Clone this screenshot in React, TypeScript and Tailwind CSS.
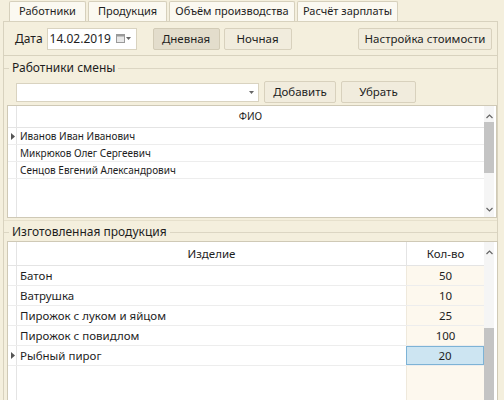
import React from 'react';

// ─── Data ─────────────────────────────────────────────────────────────────────

const tabs = [
  { label: 'Работники', w: 'w-[77px]' },
  { label: 'Продукция', w: 'w-[79px]' },
  { label: 'Объём производства', w: 'w-[126px]' },
  { label: 'Расчёт зарплаты', w: 'w-[101px]' },
];

const workers = ['Иванов Иван Иванович', 'Микрюков Олег Сергеевич', 'Сенцов Евгений Александрович'];

const products = [
  { name: 'Батон', qty: 50 },
  { name: 'Ватрушка', qty: 10 },
  { name: 'Пирожок с луком и яйцом', qty: 25 },
  { name: 'Пирожок с повидлом', qty: 100 },
  { name: 'Рыбный пирог', qty: 20 },
];

// ─── Small pieces ─────────────────────────────────────────────────────────────

function RowArrow() {
  return (
    <svg width="4" height="7" viewBox="0 0 4 7" className="ml-[3px]">
      <path d="M0 0 L4 3.5 L0 7 Z" fill="#555" />
    </svg>
  );
}

function Btn({ label, w, pressed }: { label: string; w: string; pressed?: boolean }) {
  return (
    <div
      className={`${w} h-[22px] flex items-center justify-center whitespace-nowrap rounded-[2px] border text-[11.5px] ${
        pressed ? 'bg-[#e3ddcc] border-[#d2cbb6]' : 'bg-[#f1ecdd] border-[#d8d1bd]'
      }`}
    >
      {label}
    </div>
  );
}

function GroupTitle({ label }: { label: string }) {
  return (
    <div className="flex items-center h-[18px]">
      <div className="w-[5px] border-t border-[#dcd6c3]" />
      <span className="px-[3px] text-[12px] leading-[16px] whitespace-nowrap">{label}</span>
      <div className="flex-1 border-t border-[#dcd6c3]" />
    </div>
  );
}

function ScrollBar({ thumbTop, thumbH, down }: { thumbTop: string; thumbH: string; down?: boolean }) {
  return (
    <div className="w-[10px] h-full flex flex-col items-center bg-[#f5f5f5]">
      <svg width="7" height="5" viewBox="0 0 7 5" className="mt-[8px] shrink-0">
        <path d="M0.5 4 L3.5 1 L6.5 4" stroke="#666" strokeWidth="1.2" fill="none" />
      </svg>
      <div className={`${thumbTop} ${thumbH} w-[10px] bg-[#c4c4c4] shrink-0`} />
      {down && (
        <>
          <div className="flex-1" />
          <svg width="7" height="5" viewBox="0 0 7 5" className="mb-[5px] shrink-0">
            <path d="M0.5 1 L3.5 4 L6.5 1" stroke="#666" strokeWidth="1.2" fill="none" />
          </svg>
        </>
      )}
    </div>
  );
}

// ─── Main ─────────────────────────────────────────────────────────────────────

export default function App() {
  return (
    <div className="w-[504px] h-[400px] overflow-hidden bg-[#f4efdd] text-[#1e1e1e] font-['Noto_Sans',sans-serif]">
      {/* Tab strip */}
      <div className="flex items-end gap-[2px] h-[21px] pl-[9px]">
        {tabs.map((t) => (
          <div
            key={t.label}
            className={`${t.w} h-[20px] flex items-center justify-center whitespace-nowrap border border-b-0 border-[#d6d0bc] bg-[#fbf9f1] rounded-t-[2px] text-[11px]`}
          >
            {t.label}
          </div>
        ))}
      </div>

      <div className="ml-[3px] w-[495px] h-[379px] border-l border-r border-t border-[#d8d2be] flex flex-col">
        {/* Toolbar */}
        <div className="h-[34px] shrink-0 flex items-center border-b border-[#d8d2be] pl-[11px]">
          <span className="text-[12px]">Дата</span>
          <div className="ml-[4px] w-[90px] h-[22px] bg-white border border-[#d9d3c0] flex items-center pl-[2px] text-[12px]">
            <span>14.02.2019</span>
            <div className="flex-1" />
            <svg width="9" height="9" viewBox="0 0 9 9" className="mr-[1px]">
              <rect x="0.5" y="0.5" width="8" height="8" fill="#e8e8e8" stroke="#9a9a9a" />
              <rect x="0.5" y="0.5" width="8" height="2" fill="#9a9a9a" />
            </svg>
            <svg width="5" height="3" viewBox="0 0 5 3" className="mr-[5px]">
              <path d="M0 0 L5 0 L2.5 3 Z" fill="#666" />
            </svg>
          </div>
          <div className="ml-[16px] flex gap-[4px]">
            <Btn label="Дневная" w="w-[67px]" pressed />
            <Btn label="Ночная" w="w-[68px]" />
          </div>
          <div className="flex-1" />
          <div className="mr-[5px]">
            <Btn label="Настройка стоимости" w="w-[134px]" />
          </div>
        </div>

        {/* Workers group */}
        <div className="mt-[3px] flex flex-col">
          <GroupTitle label="Работники смены" />
          <div className="mt-[4px] flex items-center gap-[5px] pl-[12px]">
            <div className="w-[243px] h-[19px] bg-white border border-[#d9d3c0] flex items-center justify-end pr-[4px]">
              <svg width="5" height="3" viewBox="0 0 5 3">
                <path d="M0 0 L5 0 L2.5 3 Z" fill="#666" />
              </svg>
            </div>
            <Btn label="Добавить" w="w-[72px]" />
            <Btn label="Убрать" w="w-[75px]" />
          </div>
          <div className="mt-[2px] ml-[3px] w-[490px] h-[113px] bg-white border border-[#cfc9b6] flex">
            <div className="flex-1 flex flex-col">
              <div className="h-[22px] flex border-b border-[#e4e4e4]">
                <div className="w-[9px] border-r border-[#e4e4e4]" />
                <div className="flex-1 flex items-center justify-center text-[10px]">ФИО</div>
              </div>
              {workers.map((w, i) => (
                <div key={w} className="h-[17px] flex border-b border-[#ededed]">
                  <div className="w-[9px] border-r border-[#e4e4e4] flex items-center">
                    {i === 0 && <RowArrow />}
                  </div>
                  <div className="flex-1 flex items-center pl-[3px] text-[10px]">{w}</div>
                </div>
              ))}
              <div className="flex-1 flex">
                <div className="w-[9px] border-r border-[#e4e4e4]" />
              </div>
            </div>
            <ScrollBar thumbTop="mt-[3px]" thumbH="h-[51px]" down />
            <div className="w-[2px]" />
          </div>
        </div>

        <div className="mt-[2px] border-t border-[#e6e0cc]" />

        {/* Products group */}
        <div className="mt-[2px] flex flex-col flex-1">
          <GroupTitle label="Изготовленная продукция" />
          <div className="ml-[3px] w-[491px] flex-1 bg-white border border-[#cfc9b6] border-b-0 flex">
            <div className="flex-1 flex flex-col">
              <div className="h-[24px] flex border-b border-[#e4e4e4] text-[11.5px]">
                <div className="w-[9px] border-r border-[#e4e4e4]" />
                <div className="flex-1 flex items-center justify-center">Изделие</div>
                <div className="w-[78px] flex items-center justify-center border-l border-[#e4e4e4]">Кол-во</div>
              </div>
              {products.map((p, i) => {
                const selected = i === products.length - 1;
                return (
                  <div key={p.name} className="h-[20px] flex border-b border-[#ededed] text-[11.5px]">
                    <div className="w-[9px] border-r border-[#e4e4e4] flex items-center">
                      {selected && <RowArrow />}
                    </div>
                    <div className="flex-1 flex items-center pl-[3px]">{p.name}</div>
                    <div
                      className={`w-[78px] flex items-center justify-center ${
                        selected ? 'bg-[#cde5f2] border border-[#7db3d6]' : 'bg-[#fdf8ee] border-l border-[#efe9dc]'
                      }`}
                    >
                      {p.qty}
                    </div>
                  </div>
                );
              })}
              <div className="flex-1 flex">
                <div className="w-[9px] border-r border-[#e4e4e4]" />
                <div className="flex-1" />
                <div className="w-[78px] bg-[#fdf8ee] border-l border-[#efe9dc]" />
              </div>
            </div>
            <ScrollBar thumbTop="mt-[73px]" thumbH="h-[80px]" />
            <div className="w-[3px]" />
          </div>
        </div>
      </div>
    </div>
  );
}
